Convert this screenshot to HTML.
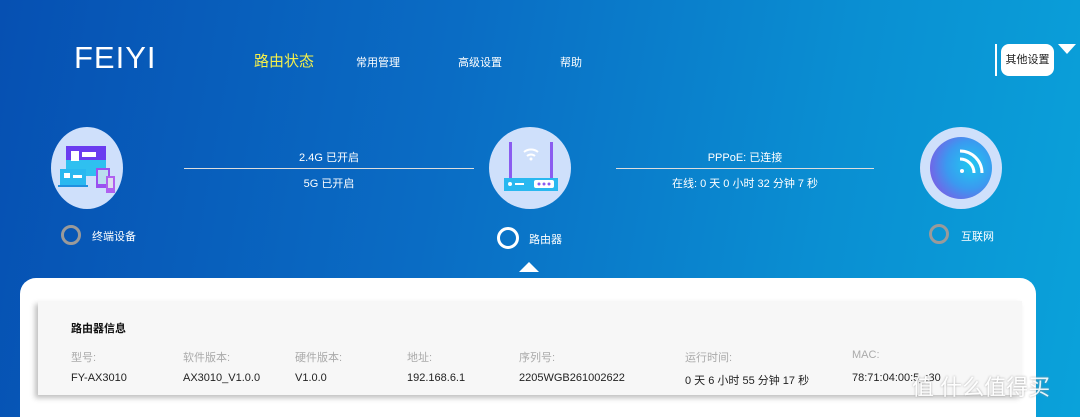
<!DOCTYPE html>
<html><head><meta charset="utf-8"><style>
*{margin:0;padding:0;box-sizing:border-box}
html,body{width:1080px;height:417px;overflow:hidden}
body{position:relative;font-family:"Liberation Sans","Noto Sans CJK SC",sans-serif;color:#fff;
background:linear-gradient(100deg,#0650b2 0%,#0a6cc4 40%,#0a8fd2 75%,#0aa2da 100%);}
.a{position:absolute}
.nav{font-size:11px}
.ring{position:absolute;width:20px;height:20px;border-radius:50%;border:3px solid #9a9a9a}
.lbl{font-size:11px}
.line{position:absolute;height:1px;background:#ddd}
.t{font-size:11px;text-align:center;position:absolute}
.card{position:absolute;left:20px;top:278px;width:1016px;height:139px;background:#fff;border-radius:16px 16px 0 0}
.panel{position:absolute;left:38px;top:301px;width:984px;height:94px;background:#f7f7f7;box-shadow:-3px 3px 5px rgba(0,0,0,.25)}
.h{font-size:11px;color:#aaa;position:absolute;top:349px}
.v{font-size:11px;color:#222;position:absolute;top:372px}
</style></head><body>
<div class="a" style="left:74px;top:40px;font-size:31px;letter-spacing:1px">FEIYI</div>
<div class="a" style="left:254px;top:50px;font-size:15px;color:#f5f04a">路由状态</div>
<div class="a nav" style="left:356px;top:54px">常用管理</div>
<div class="a nav" style="left:458px;top:54px">高级设置</div>
<div class="a nav" style="left:560px;top:54px">帮助</div>
<div class="a" style="left:995px;top:44px;width:2px;height:32px;background:#fff"></div>
<div class="a" style="left:1001px;top:44px;width:53px;height:32px;background:#fff;border-radius:8px;color:#222;font-size:11px;line-height:32px;text-align:center">其他设置</div>
<div class="a" style="left:1058px;top:44px;width:0;height:0;border-left:9px solid transparent;border-right:9px solid transparent;border-top:10px solid #fff"></div>

<!-- device icon -->
<div class="a" style="left:51px;top:127px;width:72px;height:82px;border-radius:50%;background:#cfe0fb"></div>
<svg class="a" style="left:58px;top:140px" width="60" height="55">
<rect x="8" y="6" width="40" height="30" fill="#6a3cf0"/><rect x="8" y="20" width="40" height="16" fill="#2fc0f0"/>
<rect x="13" y="11" width="8" height="10" fill="#fff"/><rect x="24" y="12" width="14" height="5" fill="#fff"/>
<rect x="2" y="29" width="26" height="16" fill="#29b8f0"/><rect x="0" y="45" width="30" height="2" fill="#1e90e0"/>
<rect x="6" y="33" width="6" height="5" fill="#fff"/><rect x="15" y="35" width="9" height="3" fill="#fff"/>
<rect x="38" y="28" width="14" height="20" fill="#9a50f0"/><rect x="40" y="30" width="10" height="14" fill="#bde"/>
<rect x="48" y="36" width="9" height="17" fill="#b060f0"/><rect x="50" y="38" width="5" height="10" fill="#dde"/>
</svg>
<div class="ring" style="left:61px;top:225px"></div>
<div class="a lbl" style="left:92px;top:228px">终端设备</div>

<div class="t" style="left:184px;width:290px;top:149px">2.4G 已开启</div>
<div class="line" style="left:184px;width:290px;top:168px"></div>
<div class="t" style="left:184px;width:290px;top:175px">5G 已开启</div>

<!-- router -->
<div class="a" style="left:489px;top:127px;width:82px;height:82px;border-radius:50%;background:#cfe0fb"></div>
<svg class="a" style="left:496px;top:140px" width="70" height="55">
<rect x="13" y="2" width="3" height="40" fill="#8a5cf0"/><rect x="54" y="2" width="3" height="40" fill="#8a5cf0"/>
<path d="M31 16a6 6 0 0 1 8 0M28 12a11 11 0 0 1 14 0" stroke="#fff" stroke-width="2" fill="none"/><circle cx="35" cy="19" r="1.5" fill="#fff"/>
<rect x="8" y="38" width="54" height="13" fill="#29b8f0"/>
<circle cx="14" cy="44" r="2" fill="#fff"/><rect x="19" y="43" width="9" height="2" fill="#fff"/>
<rect x="38" y="40" width="20" height="8" rx="2" fill="#fff"/><circle cx="43" cy="44" r="1.5" fill="#8a5cf0"/><circle cx="48" cy="44" r="1.5" fill="#8a5cf0"/><circle cx="53" cy="44" r="1.5" fill="#8a5cf0"/>
</svg>
<div class="ring" style="left:497px;top:227px;border-color:#fff;width:22px;height:22px"></div>
<div class="a lbl" style="left:529px;top:231px">路由器</div>
<div class="a" style="left:519px;top:262px;width:0;height:0;border-left:10px solid transparent;border-right:10px solid transparent;border-bottom:10px solid #fff"></div>

<div class="t" style="left:616px;width:258px;top:149px">PPPoE: 已连接</div>
<div class="line" style="left:616px;width:258px;top:168px"></div>
<div class="t" style="left:616px;width:258px;top:175px">在线: 0 天 0 小时 32 分钟 7 秒</div>

<!-- internet -->
<div class="a" style="left:920px;top:127px;width:82px;height:82px;border-radius:50%;background:#cfe0fb"></div>
<div class="a" style="left:930px;top:137px;width:62px;height:62px;border-radius:50%;background:radial-gradient(circle at 65% 45%,#20c8f0 0%,#3a9af0 45%,#9a40e0 100%)"></div>
<svg class="a" style="left:930px;top:137px" width="62" height="62"><path d="M30 22a14 14 0 0 1 14 14M30 14a22 22 0 0 1 22 22" stroke="#fff" stroke-width="3" fill="none"/><circle cx="32" cy="34" r="2" fill="#fff"/></svg>
<div class="ring" style="left:929px;top:224px"></div>
<div class="a lbl" style="left:961px;top:228px">互联网</div>

<div class="card"></div>
<div class="panel"></div>
<div class="a" style="left:71px;top:320px;font-size:11px;color:#111;font-weight:bold">路由器信息</div>
<div class="h" style="left:71px">型号:</div><div class="v" style="left:71px">FY-AX3010</div>
<div class="h" style="left:183px">软件版本:</div><div class="v" style="left:183px">AX3010_V1.0.0</div>
<div class="h" style="left:295px">硬件版本:</div><div class="v" style="left:295px">V1.0.0</div>
<div class="h" style="left:407px">地址:</div><div class="v" style="left:407px">192.168.6.1</div>
<div class="h" style="left:519px">序列号:</div><div class="v" style="left:519px">2205WGB261002622</div>
<div class="h" style="left:685px">运行时间:</div><div class="v" style="left:685px">0 天 6 小时 55 分钟 17 秒</div>
<div class="h" style="left:852px">MAC:</div><div class="v" style="left:852px">78:71:04:00:5_:30</div>
<div class="a" style="left:912px;top:370px;font-size:22px;color:#fff;text-shadow:0 0 2px #999;opacity:.9">值 什么值得买</div>
</body></html>
